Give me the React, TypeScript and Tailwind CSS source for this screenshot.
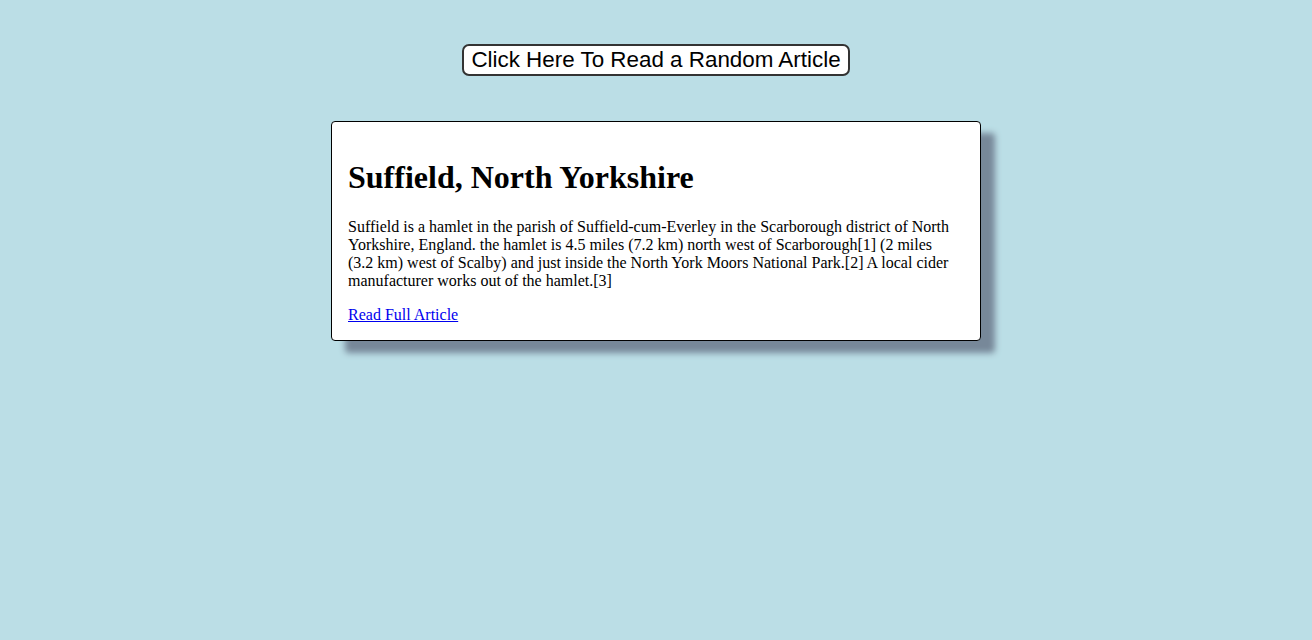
export default function App() {
  return (
    <div className="min-h-screen bg-[#bbdee6] flex flex-col items-center pt-[44px]" style={{ fontFamily: '"Liberation Serif", serif' }}>
      <button
        className="bg-white text-black text-[22.4px] leading-[normal] px-[7px] py-[1px] border-2 border-[#333] rounded-[7px]"
        style={{ fontFamily: '"Liberation Sans", Arial, sans-serif' }}
      >
        Click Here To Read a Random Article
      </button>

      <div className="mt-[45px] w-[650px] bg-white border border-black rounded-[4px] pl-4 pr-[21px] py-4 shadow-[14px_12px_6px_#778899] text-black text-[16px] leading-[normal]">
        <h1 className="text-[32px] font-bold my-[21.44px] leading-[normal]">Suffield, North Yorkshire</h1>
        <p className="my-4">
          Suffield is a hamlet in the parish of Suffield-cum-Everley in the Scarborough district of North Yorkshire, England. the hamlet is 4.5 miles (7.2 km) north west of Scarborough[1] (2 miles (3.2 km) west of Scalby) and just inside the North York Moors National Park.[2] A local cider manufacturer works out of the hamlet.[3]
        </p>
        <a href="#" className="text-[#0000ee] underline">
          Read Full Article
        </a>
      </div>
    </div>
  );
}
